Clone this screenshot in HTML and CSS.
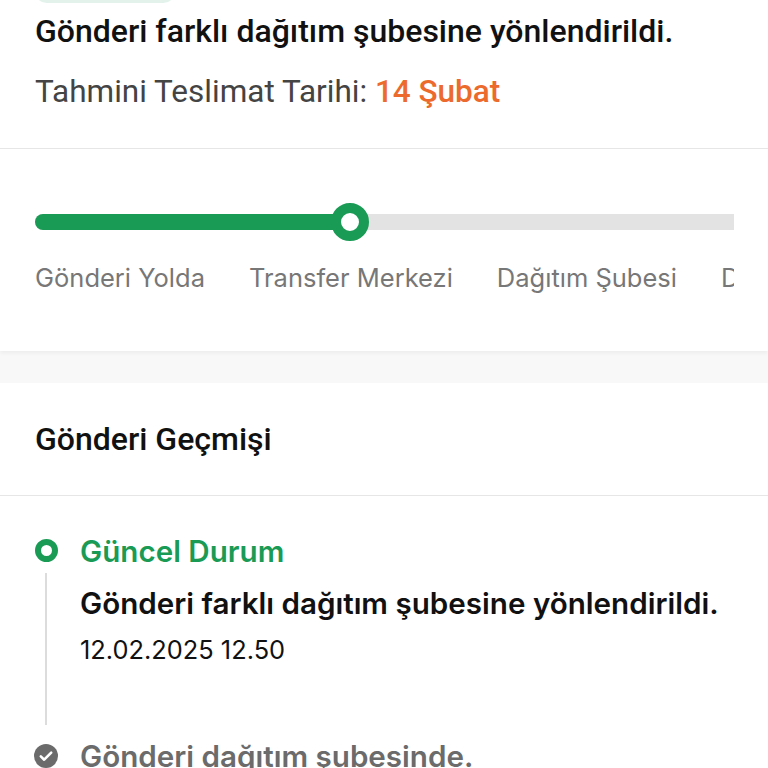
FILE: index.html
```html
<!DOCTYPE html>
<html lang="tr">
<head>
<meta charset="utf-8">
<link rel="stylesheet" href="styles.css">
</head>
<body>
<section class="summary">
  <div class="pill"></div>
  <h1 class="headline">Gönderi farklı dağıtım şubesine yönlendirildi.</h1>
  <p class="eta">Tahmini Teslimat Tarihi: <span class="eta-date">14 Şubat</span></p>
</section>
<section class="progress">
  <div class="track">
    <div class="fill"></div>
    <div class="knob"></div>
  </div>
  <div class="steps">
    <span class="step">Gönderi Yolda</span>
    <span class="step">Transfer Merkezi</span>
    <span class="step">Dağıtım Şubesi</span>
    <span class="step">Dağıtıldı</span>
  </div>
</section>
<div class="gap"></div>
<section class="history">
  <h2 class="history-title">Gönderi Geçmişi</h2>
  <div class="timeline">
    <div class="event current">
      <div class="rail">
        <span class="ring"></span>
        <span class="line"></span>
      </div>
      <div class="event-body">
        <div class="event-label">Güncel Durum</div>
        <div class="event-text">Gönderi farklı dağıtım şubesine yönlendirildi.</div>
        <div class="event-date">12.02.2025 12.50</div>
      </div>
    </div>
    <div class="event past">
      <div class="rail">
        <span class="check"><svg viewBox="0 0 24 24" width="24" height="24"><circle cx="12" cy="12" r="12" fill="#6b6b6b"/><path d="M6.8 12.4l3.4 3.3 7-7" fill="none" stroke="#fff" stroke-width="2.6" stroke-linecap="round" stroke-linejoin="round"/></svg></span>
      </div>
      <div class="event-body">
        <div class="event-label gray">Gönderi dağıtım şubesinde.</div>
      </div>
    </div>
  </div>
</section>
</body>
</html>
```
FILE: styles.css
```css
* { box-sizing: border-box; }
html, body { margin: 0; padding: 0; }
body {
  background: #f8f8f8;
  width: 768px;
  height: 768px;
  overflow: hidden;
  font-family: Roboto, "Liberation Sans", sans-serif;
}
.summary {
  background: #fff;
  padding: 0 35px;
  height: 149px;
  border-bottom: 1.5px solid #e6e6e6;
  position: relative;
}
.pill {
  position: absolute;
  left: 35px;
  top: -20px;
  width: 140px;
  height: 23px;
  border-radius: 12px;
  background: #e3f3ec;
}
.headline {
  margin: 0;
  padding-top: 13px;
  font-size: 32px;
  line-height: 36px;
  font-weight: 500;
  color: #111;
  white-space: nowrap;
}
.eta {
  margin: 25px 0 0;
  font-size: 31.5px;
  line-height: 36px;
  color: #444;
  font-weight: 400;
  white-space: nowrap;
}
.eta-date { color: #ec6a2c; font-weight: 500; }

.progress {
  background: #fff;
  height: 202px;
  padding: 53px 34px 0 35px;
  box-shadow: 0 2px 4px rgba(0,0,0,0.05);
  overflow: hidden;
}
.track {
  position: relative;
  height: 16px;
  background: #e3e3e3;
  border-radius: 8px 0 0 8px;
  margin-top: 12px;
}
.fill {
  width: 315px;
  height: 16px;
  background: #1a9b55;
  border-radius: 8px;
}
.knob {
  position: absolute;
  left: 296px;
  top: -11px;
  width: 38px;
  height: 38px;
  border-radius: 50%;
  background: #fff;
  border: 10px solid #1a9b55;
}
.steps {
  display: flex;
  gap: 44px;
  margin-top: 33px;
  font-family: Inter, sans-serif;
  font-size: 25.5px;
  line-height: 30px;
  color: #777;
  white-space: nowrap;
  overflow: hidden;
}
.step { flex: none; }

.gap { height: 32px; }

.history {
  background: #fff;
  height: 400px;
}
.history-title {
  margin: 0;
  padding: 0 35px;
  height: 113px;
  display: flex;
  align-items: center;
  font-size: 32px;
  font-weight: 500;
  color: #111;
  border-bottom: 1.5px solid #e6e6e6;
}
.timeline {
  padding: 36.5px 35px 0 34px;
  font-family: Inter, sans-serif;
}
.event { display: flex; gap: 22px; }
.rail {
  width: 24px;
  flex: none;
  display: flex;
  flex-direction: column;
  align-items: center;
}
.ring {
  margin-top: 6.5px;
  width: 23px;
  height: 23px;
  border-radius: 50%;
  border: 6.5px solid #1a9b55;
  background: #fff;
}
.line {
  width: 2px;
  height: 152px;
  margin-top: 11px;
  background: #dcdcdc;
}
.check { margin-top: 18.5px; display: block; height: 24px; }
.event-body { flex: 1; }
.event-label {
  font-size: 29.6px;
  line-height: 36px;
  font-weight: 600;
  color: #1a9b55;
  white-space: nowrap;
}
.event-label.gray { color: #6b6b6b; margin-top: 12.5px; }
.event-text {
  margin-top: 16px;
  font-size: 29.6px;
  line-height: 36px;
  font-weight: 600;
  color: #111;
  white-space: nowrap;
}
.event-date {
  margin-top: 14px;
  font-size: 25.4px;
  line-height: 30px;
  color: #111;
}
```
